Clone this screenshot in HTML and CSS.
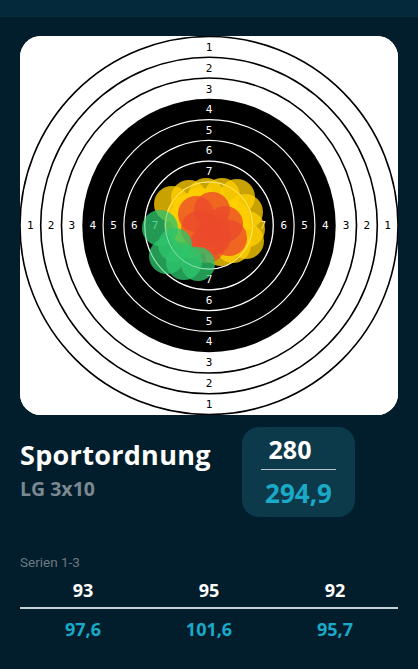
FILE: index.html
```html
<!DOCTYPE html>
<html lang="de">
<head>
<meta charset="utf-8">
<title>Sportordnung</title>
<link rel="stylesheet" href="styles.css">
</head>
<body>
<div class="statusbar"></div>
<main class="content">
  <div class="target-card">
    <svg class="target" viewBox="20 36 378 379" width="378" height="379" xmlns="http://www.w3.org/2000/svg">
      <rect x="20" y="36" width="378" height="379" fill="#fff"/>
      <g fill="none" stroke="#000" stroke-width="1.6">
        <circle cx="209" cy="225.5" r="189"/>
        <circle cx="209" cy="225.5" r="168.3"/>
        <circle cx="209" cy="225.5" r="147.5"/>
      </g>
      <circle cx="209" cy="225.5" r="126.7" fill="#000"/>
      <g fill="none" stroke="#fff" stroke-width="1.2">
        <circle cx="209" cy="225.5" r="105.9"/>
        <circle cx="209" cy="225.5" r="85.1"/>
        <circle cx="209" cy="225.5" r="64.3"/>
        <circle cx="209" cy="225.5" r="43.6"/>
        <circle cx="209" cy="225.5" r="22.8"/>
      </g>
      <circle cx="209" cy="225.5" r="2" fill="#fff"/>
      <g class="ring-num dark">
        <text x="209" y="47">1</text><text x="209" y="68">2</text><text x="209" y="89">3</text>
        <text x="209" y="404">1</text><text x="209" y="383">2</text><text x="209" y="362">3</text>
        <text x="30.4" y="225.5">1</text><text x="51.1" y="225.5">2</text><text x="71.9" y="225.5">3</text>
        <text x="387.6" y="225.5">1</text><text x="366.9" y="225.5">2</text><text x="346.1" y="225.5">3</text>
      </g>
      <g class="ring-num light">
        <text x="209" y="109.2">4</text><text x="209" y="130">5</text><text x="209" y="150.8">6</text><text x="209" y="171.6">7</text><text x="209" y="192.3">8</text>
        <text x="209" y="341.8">4</text><text x="209" y="321">5</text><text x="209" y="300.2">6</text><text x="209" y="279.4">7</text><text x="209" y="258.7">8</text>
        <text x="92.7" y="225.5">4</text><text x="113.5" y="225.5">5</text><text x="134.3" y="225.5">6</text><text x="155.1" y="225.5">7</text><text x="175.8" y="225.5">8</text>
        <text x="325.3" y="225.5">4</text><text x="304.5" y="225.5">5</text><text x="283.7" y="225.5">6</text><text x="262.9" y="225.5">7</text><text x="242.2" y="225.5">8</text>
      </g>
      <g class="shots yellow">
        <circle cx="172" cy="204" r="18"/>
        <circle cx="189" cy="198" r="18"/>
        <circle cx="206" cy="196" r="18"/>
        <circle cx="222" cy="196" r="18"/>
        <circle cx="237" cy="197" r="18"/>
        <circle cx="245" cy="212" r="18"/>
        <circle cx="247" cy="229" r="18"/>
        <circle cx="246" cy="241" r="18"/>
        <circle cx="233" cy="245" r="18"/>
        <circle cx="221" cy="248" r="18"/>
        <circle cx="190" cy="240" r="18"/>
        <circle cx="182" cy="224" r="18"/>
        <circle cx="200" cy="206" r="18"/>
        <circle cx="232" cy="218" r="18"/>
        <circle cx="186" cy="213" r="18"/>
      </g>
      <g class="shots red">
        <circle cx="196" cy="214" r="18"/>
        <circle cx="212" cy="210" r="18"/>
        <circle cx="225" cy="224" r="18"/>
        <circle cx="213" cy="237" r="18"/>
        <circle cx="199" cy="229" r="18"/>
        <circle cx="229" cy="238" r="18"/>
        <circle cx="207" cy="245" r="18"/>
      </g>
      <g class="shots green">
        <circle cx="160" cy="228" r="18"/>
        <circle cx="167" cy="256" r="18"/>
        <circle cx="184" cy="262" r="18"/>
        <circle cx="198" cy="264" r="17"/>
        <circle cx="175" cy="245" r="17"/>
      </g>
      <g fill="none" stroke="#fff" stroke-width="1" opacity="0.4">
        <circle cx="209" cy="225.5" r="64.3"/>
        <circle cx="209" cy="225.5" r="43.6"/>
      </g>
    </svg>
  </div>

  <section class="summary">
    <div class="title-block">
      <h1 class="title">Sportordnung</h1>
      <div class="subtitle">LG 3x10</div>
    </div>
    <div class="score-box">
      <div class="score-int">280</div>
      <div class="score-line"></div>
      <div class="score-dec">294,9</div>
    </div>
  </section>

  <section class="series">
    <div class="series-label">Serien 1-3</div>
    <div class="series-grid">
      <div class="s-int">93</div>
      <div class="s-int">95</div>
      <div class="s-int">92</div>
    </div>
    <div class="series-line"></div>
    <div class="series-grid">
      <div class="s-dec">97,6</div>
      <div class="s-dec">101,6</div>
      <div class="s-dec">95,7</div>
    </div>
  </section>
</main>
</body>
</html>
```

FILE: styles.css
```css
html, body {
  margin: 0;
  padding: 0;
}
body {
  width: 418px;
  height: 669px;
  overflow: hidden;
  background: #021e2c;
  font-family: "Open Sans", "Noto Sans", sans-serif;
}
.statusbar {
  height: 17px;
  background: #03293a;
}
.content {
  padding: 19px 20px 0 20px;
}
.target-card {
  width: 378px;
  height: 379px;
  border-radius: 21px;
  overflow: hidden;
  background: #fff;
}
.target {
  display: block;
}
.ring-num text {
  font-family: "DejaVu Sans Mono", monospace;
  font-size: 11px;
  text-anchor: middle;
  dominant-baseline: central;
}
.ring-num.dark text { fill: #000; }
.ring-num.light text { fill: #fff; }
.shots circle { opacity: 0.78; }
.shots.yellow circle { fill: #ffd000; }
.shots.red circle { fill: #ec4a2c; }
.shots.green circle { fill: #2ec46c; }

.summary {
  display: flex;
  align-items: flex-start;
  margin-top: 12px;
}
.title-block {
  width: 222px;
  padding-top: 10px;
}
.title {
  margin: 0;
  font-size: 27px;
  font-weight: 700;
  color: #fff;
  line-height: 35px;
  letter-spacing: 0.3px;
}
.subtitle {
  margin-top: 5px;
  font-size: 19.5px;
  font-weight: 700;
  color: #7b8891;
  line-height: 24px;
}
.score-box {
  width: 113px;
  height: 90px;
  border-radius: 17px;
  background: #0d3a4b;
  display: flex;
  flex-direction: column;
  align-items: center;
  box-sizing: border-box;
  padding-top: 7px;
}
.score-int {
  font-size: 25px;
  font-weight: 700;
  color: #fff;
  line-height: 30px;
  padding-right: 17px;
}
.score-line {
  width: 75px;
  height: 1px;
  background: #b9c5ca;
  margin-top: 5px;
}
.score-dec {
  font-size: 26px;
  font-weight: 700;
  color: #1ba9c8;
  line-height: 32px;
  margin-top: 7px;
}
.series {
  margin-top: 37px;
}
.series-label {
  font-family: "Roboto", sans-serif;
  font-size: 13.5px;
  color: #6c7a83;
  line-height: 16px;
}
.series-grid {
  display: grid;
  grid-template-columns: 1fr 1fr 1fr;
  text-align: center;
}
.s-int {
  font-size: 18px;
  font-weight: 700;
  color: #fff;
  line-height: 24px;
  margin-top: 8px;
}
.series-line {
  height: 2px;
  background: #c9d1d5;
  margin-top: 5px;
}
.s-dec {
  font-size: 18px;
  font-weight: 700;
  color: #1ba9c8;
  line-height: 24px;
  margin-top: 8px;
}
```
